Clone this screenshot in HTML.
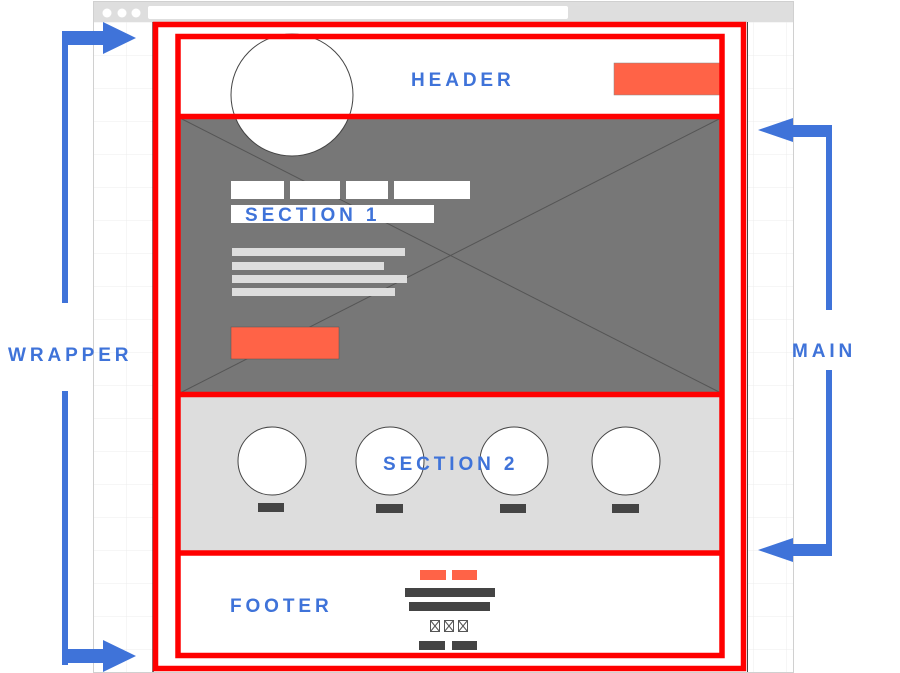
<!DOCTYPE html>
<html><head><style>
html,body{margin:0;padding:0;background:#fff;width:900px;height:673px;overflow:hidden}
svg{display:block}
text{font-family:"Liberation Sans",sans-serif;font-weight:bold;fill:#3f73d9;letter-spacing:3.9px}
</style></head><body>
<svg width="900" height="673" viewBox="0 0 900 673" xmlns="http://www.w3.org/2000/svg">
<defs>
<pattern id="g" width="33" height="33" patternUnits="userSpaceOnUse" x="93" y="22">
<path d="M0 0H33M0 0V33" stroke="#ececec" stroke-width="1" fill="none"/>
</pattern>
</defs>
<rect x="93.5" y="1.5" width="700" height="671" fill="#fff" stroke="#d0d0d0"/>
<rect x="94" y="22" width="699" height="650" fill="url(#g)"/>
<rect x="94" y="2" width="699" height="20" fill="#dedede"/>
<circle cx="107" cy="13" r="4.5" fill="#fff"/>
<circle cx="122" cy="13" r="4.5" fill="#fff"/>
<circle cx="136" cy="13" r="4.5" fill="#fff"/>
<rect x="148" y="6" width="420" height="13" rx="2" fill="#fff"/>
<rect x="153" y="22" width="595" height="650" fill="#fff"/>
<line x1="153" y1="22" x2="153" y2="672" stroke="#444" stroke-width="1.5"/>
<line x1="747.5" y1="22" x2="747.5" y2="672" stroke="#444" stroke-width="1"/>
<rect x="178" y="117" width="545" height="277" fill="#777"/>
<line x1="178" y1="117" x2="723" y2="394" stroke="#555" stroke-width="1"/>
<line x1="723" y1="117" x2="178" y2="394" stroke="#555" stroke-width="1"/>
<rect x="178" y="395" width="545" height="158" fill="#dddddd"/>
<circle cx="292" cy="95" r="61" fill="#fff" stroke="#444" stroke-width="1"/>
<rect x="614" y="63" width="107" height="32" fill="#ff6347" stroke="#888" stroke-width="0.5"/>
<rect x="231" y="181" width="53" height="18" fill="#fff"/>
<rect x="290" y="181" width="50" height="18" fill="#fff"/>
<rect x="346" y="181" width="42" height="18" fill="#fff"/>
<rect x="394" y="181" width="76" height="18" fill="#fff"/>
<rect x="231" y="205" width="203" height="18" fill="#fff"/>
<rect x="232" y="248" width="173" height="8" fill="#ddd"/>
<rect x="232" y="262" width="152" height="8" fill="#ddd"/>
<rect x="232" y="275" width="175" height="8" fill="#ddd"/>
<rect x="232" y="288" width="163" height="8" fill="#ddd"/>
<rect x="231" y="327" width="108" height="32" fill="#ff6347" stroke="#555" stroke-width="0.5"/>
<g fill="#fff" stroke="#444" stroke-width="1">
<circle cx="272" cy="461" r="34"/>
<circle cx="390" cy="461" r="34"/>
<circle cx="514" cy="461" r="34"/>
<circle cx="626" cy="461" r="34"/>
</g>
<g fill="#444">
<rect x="258" y="503" width="26" height="9"/>
<rect x="376" y="504" width="27" height="9"/>
<rect x="500" y="504" width="26" height="9"/>
<rect x="612" y="504" width="27" height="9"/>
</g>
<rect x="420" y="570" width="26" height="10" fill="#ff6347"/>
<rect x="452" y="570" width="25" height="10" fill="#ff6347"/>
<rect x="405" y="588" width="90" height="9" fill="#444"/>
<rect x="409" y="602" width="81" height="9" fill="#444"/>
<g fill="#fff" stroke="#555" stroke-width="1">
<rect x="430.5" y="620.5" width="9" height="11"/><path d="M430.5 620.5L439.5 631.5M439.5 620.5L430.5 631.5"/>
<rect x="444.5" y="620.5" width="9" height="11"/><path d="M444.5 620.5L453.5 631.5M453.5 620.5L444.5 631.5"/>
<rect x="458.5" y="620.5" width="9" height="11"/><path d="M458.5 620.5L467.5 631.5M467.5 620.5L458.5 631.5"/>
</g>
<rect x="419" y="641" width="26" height="9" fill="#444"/>
<rect x="452" y="641" width="25" height="9" fill="#444"/>
<g fill="none" stroke="#ff0000" stroke-width="5.5">
<rect x="155.5" y="24.5" width="588" height="644"/>
<rect x="178" y="36.5" width="544" height="619"/>
<line x1="178" y1="116.5" x2="722" y2="116.5"/>
<line x1="178" y1="394.5" x2="722" y2="394.5"/>
<line x1="178" y1="553" x2="722" y2="553"/>
</g>
<text x="411" y="86" font-size="19">HEADER</text>
<text x="245" y="221" font-size="19">SECTION 1</text>
<text x="383" y="470" font-size="19">SECTION 2</text>
<text x="230" y="612" font-size="19">FOOTER</text>
<text x="8" y="361" font-size="19">WRAPPER</text>
<text x="792" y="357" font-size="19">MAIN</text>
<g fill="#3f73d9">
<rect x="62" y="31" width="6" height="272"/>
<rect x="62" y="31" width="44" height="14"/>
<polygon points="103,22 136,38 103,54"/>
<rect x="62" y="391" width="6" height="274"/>
<rect x="62" y="649" width="44" height="14"/>
<polygon points="103,640 136,656 103,672"/>
<rect x="826" y="125" width="6" height="185"/>
<rect x="790" y="125" width="42" height="12"/>
<polygon points="793,118 758,130 793,142"/>
<rect x="826" y="370" width="6" height="186"/>
<rect x="790" y="544" width="42" height="12"/>
<polygon points="793,538 758,550 793,562"/>
</g>
</svg>
</body></html>
